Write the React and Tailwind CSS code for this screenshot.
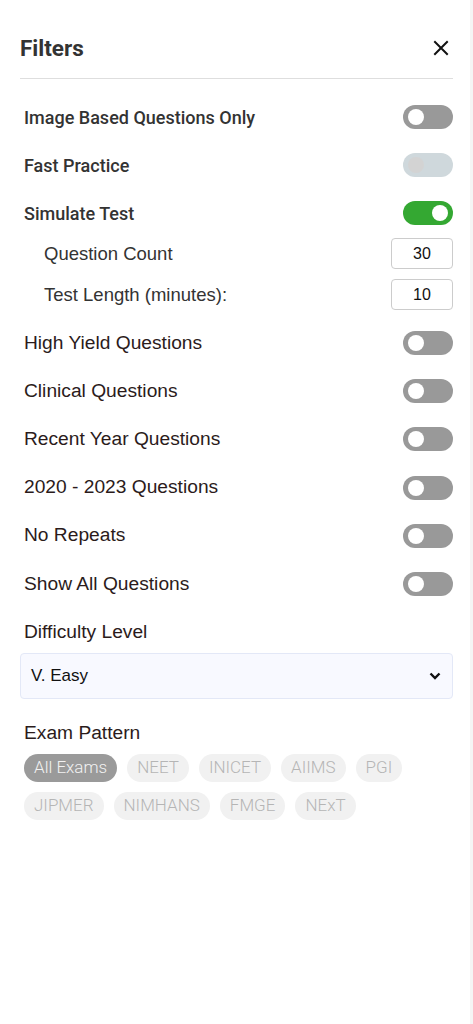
import { useState } from 'react';

const roboto = { fontFamily: 'Roboto, "Liberation Sans", sans-serif' };

function Toggle({ on, disabled }) {
  if (disabled) {
    return (
      <div className="flex h-[24px] w-[50px] items-center rounded-full bg-[#cfd8dc] px-[5px]">
        <div className="h-[16px] w-[16px] rounded-full bg-[#d3d3d3]" />
      </div>
    );
  }
  return (
    <div
      className={`flex h-[24px] w-[50px] items-center rounded-full px-[5px] ${
        on ? 'justify-end bg-[#34a832]' : 'justify-start bg-[#999999]'
      }`}
    >
      <div className="h-[16px] w-[16px] rounded-full bg-white" />
    </div>
  );
}

const plainRows = [
  'High Yield Questions',
  'Clinical Questions',
  'Recent Year Questions',
  '2020 - 2023 Questions',
  'No Repeats',
  'Show All Questions',
];

const exams = ['All Exams', 'NEET', 'INICET', 'AIIMS', 'PGI', 'JIPMER', 'NIMHANS', 'FMGE', 'NExT'];

export default function App() {
  const [exam] = useState('All Exams');

  return (
    <div
      className="relative min-h-[1024px] w-full bg-white text-[#2b1b1b]"
      style={{ fontFamily: '"Liberation Sans", Arial, sans-serif' }}
    >
      {/* faint scrollbar track on the right edge */}
      <div className="absolute right-0 top-0 h-full w-[3px] bg-[#f5f5f5]" />

      <div className="px-[20px]">
        <div className="flex h-[79px] items-center justify-between border-b border-[#dedede] pt-[18px]">
          <h2 className="text-[22.5px] font-bold leading-[28px] text-[#333333]" style={roboto}>
            Filters
          </h2>
          <svg width="16" height="16" viewBox="0 0 16 16" className="mr-[4px]">
            <path d="M2 2 L14 14 M14 2 L2 14" stroke="#111" strokeWidth="2" strokeLinecap="square" />
          </svg>
        </div>
      </div>

      <div className="px-[20px] pt-[14px]">
        <div className="flex h-[48px] items-center justify-between pl-[4px]">
          <span className="text-[18px] font-medium text-[#333333]" style={roboto}>
            Image Based Questions Only
          </span>
          <Toggle on={false} />
        </div>
        <div className="flex h-[48px] items-center justify-between pl-[4px]">
          <span className="text-[18px] font-medium text-[#333333]" style={roboto}>
            Fast Practice
          </span>
          <Toggle disabled />
        </div>
        <div className="flex h-[48px] items-center justify-between pl-[4px]">
          <span className="text-[18px] font-medium text-[#333333]" style={roboto}>
            Simulate Test
          </span>
          <Toggle on />
        </div>

        <div className="-mt-[4px]">
          <div className="flex h-[41px] items-center justify-between pl-[24px]">
            <span className="text-[18.5px] text-[#333333]">Question Count</span>
            <div className="flex h-[31px] w-[62px] items-center justify-center rounded-[4px] border border-[#cccccc] text-[16px] text-[#111]">
              30
            </div>
          </div>
          <div className="flex h-[41px] items-center justify-between pl-[24px]">
            <span className="text-[18.5px] text-[#333333]">Test Length (minutes):</span>
            <div className="flex h-[31px] w-[62px] items-center justify-center rounded-[4px] border border-[#cccccc] text-[16px] text-[#111]">
              10
            </div>
          </div>
        </div>

        <div className="pt-[4px]">
          {plainRows.map((r) => (
            <div key={r} className="flex h-[48.2px] items-center justify-between pl-[4px]">
              <span className="text-[19.2px]">{r}</span>
              <Toggle on={false} />
            </div>
          ))}
        </div>

        <div className="pl-[4px] pt-[13px] text-[19.2px] leading-[22px]">Difficulty Level</div>
        <div className="mt-[10px] flex h-[46px] items-center justify-between rounded-[4px] border border-[#e3e8f7] bg-[#f8f9ff] pl-[10px] pr-[11px]">
          <span className="text-[17px] text-[#111]">V. Easy</span>
          <svg width="12" height="8" viewBox="0 0 12 8">
            <path d="M1.5 1.5 L6 6 L10.5 1.5" fill="none" stroke="#111" strokeWidth="2.4" />
          </svg>
        </div>

        <div className="pl-[4px] pt-[23px] text-[19.2px] leading-[22px]">Exam Pattern</div>
        <div className="mt-[10px] flex flex-wrap gap-x-[10px] gap-y-[10px] pl-[4px]" style={roboto}>
          {exams.map((e) => (
            <div
              key={e}
              className={`flex h-[28px] items-center rounded-full px-[10px] text-[17px] font-light ${
                e === exam ? 'bg-[#9a9a9a] text-[#f2f2f2]' : 'bg-[#f1f1f1] text-[#b5b5b5]'
              }`}
            >
              {e}
            </div>
          ))}
        </div>
      </div>
    </div>
  );
}
